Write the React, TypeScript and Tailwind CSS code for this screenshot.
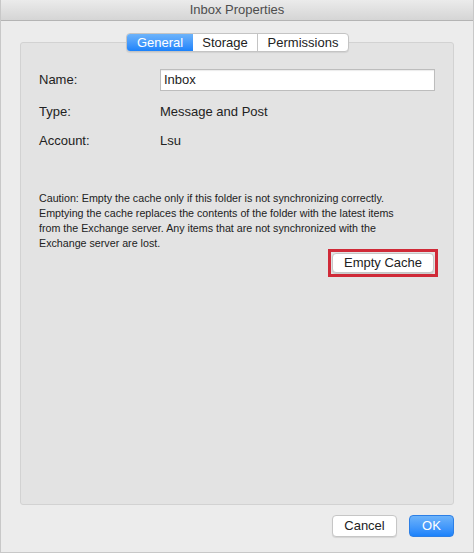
import React from "react";

export default function App() {
  return (
    <div
      className="w-[474px] h-[553px] bg-[#ececec] flex flex-col overflow-hidden border-x border-b border-[#c8c8c8]"
      style={{ fontFamily: '"Liberation Sans", Arial, sans-serif' }}
    >
      <div className="h-[21px] shrink-0 bg-gradient-to-b from-[#ebebeb] to-[#d5d5d5] border-b border-[#b4b4b4] flex items-center justify-center text-[13px] text-[#4d4d4d]">
        Inbox Properties
      </div>
      <div className="relative mx-[19px] mt-[21px] h-[463px] bg-[#e3e3e3] border border-[#d2d2d2] rounded-[3px]">
        <div className="absolute left-[105px] top-[-10px] flex h-[19px] rounded-[4px] border border-[#c4c4c4] bg-white text-[13px] text-[#222] overflow-hidden shadow-[0_1px_1px_rgba(0,0,0,0.08)]">
          <div className="w-[66px] flex items-center justify-center text-white bg-gradient-to-b from-[#6cb3fa] to-[#1a82fb]">
            General
          </div>
          <div className="w-[65px] flex items-center justify-center border-r border-[#c4c4c4]">
            Storage
          </div>
          <div className="w-[90px] flex items-center justify-center">
            Permissions
          </div>
        </div>
        <div className="pt-[26px] pl-[18px] pr-[18px] text-[13px] text-[#222]">
          <div className="flex items-center h-[22px]">
            <div className="w-[121px]">Name:</div>
            <div className="flex-1 h-[22px] bg-white border border-[#bdbdbd] flex items-center pl-[3px] shadow-[inset_0_1px_1px_rgba(0,0,0,0.08)]">
              Inbox
            </div>
          </div>
          <div className="flex items-center h-[18px] mt-[12px]">
            <div className="w-[121px]">Type:</div>
            <div>Message and Post</div>
          </div>
          <div className="flex items-center h-[18px] mt-[11px]">
            <div className="w-[121px]">Account:</div>
            <div>Lsu</div>
          </div>
          <div className="mt-[41px] text-[10.7px] leading-[15px] text-[#222] pr-[10px]">
            Caution: Empty the cache only if this folder is not synchronizing correctly.
            <br />
            Emptying the cache replaces the contents of the folder with the latest items
            <br />
            from the Exchange server. Any items that are not synchronized with the
            <br />
            Exchange server are lost.
          </div>
          <div className="flex justify-end mt-[-2px] mr-[-3px]">
            <div className="border-[3px] border-[#d02a38] p-px">
              <div className="w-[102px] h-[20px] bg-white border border-[#c6c6c6] rounded-[4px] flex items-center justify-center text-[13px] shadow-[0_1px_1px_rgba(0,0,0,0.1)]">
                Empty Cache
              </div>
            </div>
          </div>
        </div>
      </div>
      <div className="flex justify-end gap-[12px] mt-[10px] mr-[19px]">
        <div className="w-[65px] h-[22px] bg-white border border-[#c6c6c6] rounded-[4px] flex items-center justify-center text-[13px] text-[#222] shadow-[0_1px_1px_rgba(0,0,0,0.1)]">
          Cancel
        </div>
        <div className="w-[45px] h-[22px] rounded-[4px] flex items-center justify-center text-[13px] text-white bg-gradient-to-b from-[#6cb3fa] to-[#1a82fb] border border-[#2c7fe6]">
          OK
        </div>
      </div>
    </div>
  );
}
